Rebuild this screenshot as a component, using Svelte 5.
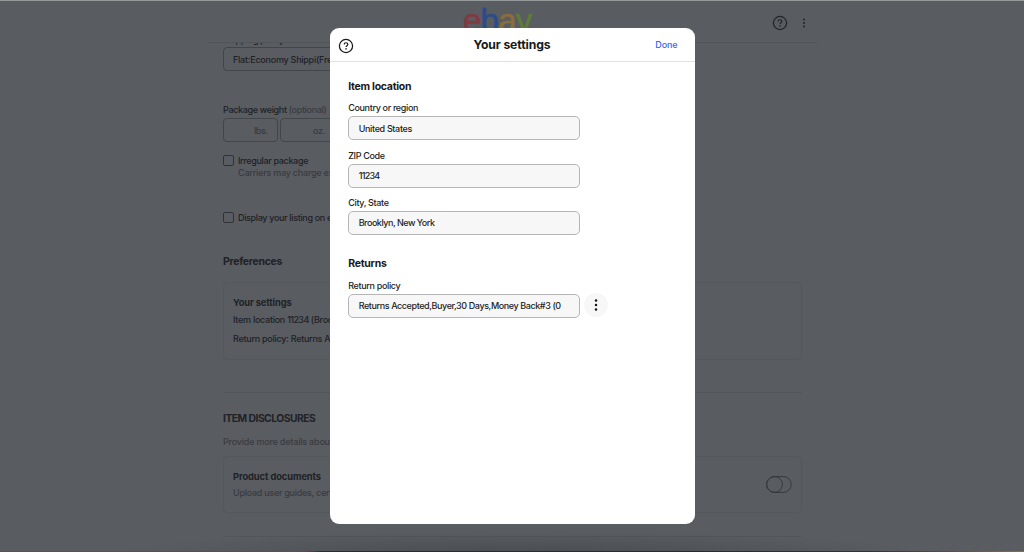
<script>
  const fields = [
    { label: 'Country or region', value: 'United States', cls: 'us' },
    { label: 'ZIP Code', value: '11234', cls: 'zip' },
    { label: 'City, State', value: 'Brooklyn, New York', cls: 'city' }
  ];
</script>

{#snippet help()}
  <svg class="help" viewBox="0 0 16 16" width="16" height="16" fill="none" stroke="currentColor">
    <circle cx="8" cy="8" r="6.6" stroke-width="1.25" />
    <path d="M6.2 6.5c0-1 .75-1.75 1.8-1.75s1.8.65 1.8 1.6c0 1.35-1.75 1.35-1.75 2.75" stroke-width="1.2" />
    <circle cx="8.03" cy="10.9" r=".8" fill="currentColor" stroke="none" />
  </svg>
{/snippet}

<div class="screen">
  <header class="top">
    <div class="logo"><span class="e">e</span><span class="b">b</span><span class="a">a</span><span class="y">y</span></div>
    <div class="tools">
      {@render help()}
      <svg width="4" height="10" viewBox="0 0 4 10" fill="currentColor"><circle cx="2" cy="1.4" r="1" /><circle cx="2" cy="5" r="1" /><circle cx="2" cy="8.6" r="1" /></svg>
    </div>
  </header>
  <main>
    <div class="line cut"><span>Shipping policy</span></div>
    <div class="box policy"><span>Flat:Economy Shippi(Free)</span></div>
    <div class="line weight"><span class="strong">Package weight</span>&nbsp;<span class="soft">(optional)</span></div>
    <div class="units">
      <div class="box unit">lbs.</div>
      <div class="box unit">oz.</div>
    </div>
    <div class="check irregular"><i></i><span>Irregular package</span></div>
    <div class="line sub soft"><span>Carriers may charge extra</span></div>
    <div class="check display"><i></i><span>Display your listing on eBay</span></div>
    <h2 class="pref">Preferences</h2>
    <section class="card settings">
      <b>Your settings</b>
      <p class="loc">Item location <span class="digits">11234</span> (Brooklyn)</p>
      <p class="ret">Return policy: Returns Accepted</p>
    </section>
    <hr />
    <h2 class="disc">ITEM DISCLOSURES</h2>
    <div class="line provide soft"><span>Provide more details about</span></div>
    <section class="card docs">
      <div>
        <b class="pd">Product documents</b>
        <p class="soft">Upload user guides, certificates</p>
      </div>
      <svg width="26" height="17" viewBox="0 0 26 17" fill="none" stroke="#36383c"><rect x=".6" y=".6" width="24.6" height="15.8" rx="7.9" /><circle cx="8.5" cy="8.5" r="7.9" /></svg>
    </section>
    <hr class="last" />
  </main>
  <div class="dock"></div>

  <div class="modal">
    <div class="head">
      {@render help()}
      <h1>Your settings</h1>
      <span class="done">Done</span>
    </div>
    <div class="body">
      <h3>Item location</h3>
      {#each fields as f}
        <div class="label {f.cls}"><span>{f.label}</span></div>
        <div class="field {f.cls}"><span>{f.value}</span></div>
      {/each}
      <h3 class="rt">Returns</h3>
      <div class="label rp"><span>Return policy</span></div>
      <div class="row">
        <div class="field long"><span>Returns Accepted,Buyer,30 Days,Money Back#3 (0</span></div>
        <div class="more"><svg width="4" height="14" viewBox="0 0 4 14" fill="#191919"><circle cx="2" cy="2.4" r="1.25" /><circle cx="2" cy="6.9" r="1.25" /><circle cx="2" cy="11.4" r="1.25" /></svg></div>
      </div>
    </div>
  </div>
</div>

<style>
  :global(body) { background: #595c61; overflow: hidden; }
  .screen, .screen * { box-sizing: border-box; }
  .screen { position: relative; width: 1024px; height: 552px; overflow: hidden; background: #595c61; border-top: 1px solid #949b9a; font-family: Inter, "Liberation Sans", sans-serif; font-size: 9px; letter-spacing: -.34px; font-weight: 450; color: #202226; white-space: nowrap; }
  svg { display: block; flex: none; }
  h1, h2, h3, p, hr { margin: 0; }
  .top { position: relative; z-index: 1; width: 609px; height: 42px; margin-left: 208px; background: #595c61; border-bottom: 1px solid #515459; display: flex; justify-content: space-between; }
  .logo { margin: 0 0 0 255px; font: 33px/40px "Liberation Sans", sans-serif; letter-spacing: -.8px; -webkit-text-stroke: .6px; }
  .e { color: #813a42; } .b { color: #2c4b8a; } .a { color: #8a6d3c; } .y { color: #5d7c38; }
  .tools { display: flex; align-items: center; gap: 14px; padding: 3px 11px 0 0; color: #222429; }
  main { width: 579px; margin-left: 223px; }
  .soft { color: #393b40; }
  .strong { font-weight: 500; }
  .line { display: flex; align-items: center; height: 12px; }
  .cut { margin-top: -10px; margin-bottom: 2px; }
  .box { border: 1px solid #42454a; border-radius: 4px; height: 24px; display: flex; align-items: center; padding: 0 9px; }
  .policy { width: 232px; letter-spacing: -.25px; }
  .weight { margin-top: 32px; }
  .units { display: flex; gap: 2px; margin-top: 3px; }
  .unit { width: 55px; justify-content: flex-end; color: #383a3f; }
  .check { display: flex; align-items: center; gap: 4px; height: 12px; }
  .check i { width: 11px; height: 11px; border: 1px solid #303237; border-radius: 2px; }
  .irregular { margin-top: 12px; }
  .sub { padding-left: 15px; letter-spacing: -.22px; }
  .display { margin-top: 33px; }
  h2 { font-size: 10.5px; font-weight: 650; height: 16px; line-height: 16px; letter-spacing: -.3px; }
  .pref { margin-top: 31px; }
  .card { border: 1px solid #54575c; border-radius: 5px; padding-left: 9px; }
  .card b { display: block; font-weight: 650; height: 14px; line-height: 14px; letter-spacing: -.35px; font-size: 9.3px; }
  .card b { letter-spacing: -.1px; }
  .card b.pd { letter-spacing: -.07px; }
  .card p { height: 14px; line-height: 14px; letter-spacing: -.27px; }
  .card .digits { letter-spacing: -.6px; }
  .settings { margin-top: 12px; height: 78px; padding-top: 13px; }
  .loc { margin-top: 3px; }
  .ret { margin-top: 5px; }
  hr { border: 0; height: 1px; background: #525559; margin-top: 32px; }
  .disc { margin-top: 17px; font-size: 10.3px; letter-spacing: -.5px; }
  .provide { margin-top: 9px; letter-spacing: -.2px; }
  .docs { margin-top: 9px; height: 57px; display: flex; justify-content: space-between; align-items: center; padding-right: 9px; }
  .docs p { margin-top: 2px; }
  .last { margin-top: 23px; }
  .dock { position: absolute; left: 0; bottom: 0; width: 1024px; height: 20px; background: linear-gradient(90deg, #59504f 0 300px, #703934 310px, #292b30 322px 710px, #303238 870px, #59413e 930px, #9b6440 1024px) bottom / 100% 1px no-repeat, radial-gradient(ellipse 400px 20px at 520px 100%, #292c3050, #292c3000); }

  .modal { position: absolute; z-index: 2; left: 329.5px; top: 27px; width: 365px; height: 496px; background: #fff; border-radius: 9px; color: #242424; }
  .head { height: 34px; border-bottom: 1px solid #e2e2e2; display: grid; grid-template-columns: 60px 1fr 60px; align-items: center; }
  .head .help { margin: 3px 0 0 8.5px; color: #191919; }
  h1 { text-align: center; font-size: 12.2px; font-weight: 650; letter-spacing: -.1px; color: #191919; }
  .done { color: #3665f3; text-align: right; padding-right: 17px; letter-spacing: -.1px; }
  .body { padding: 16.6px 0 0 18.7px; }
  h3 { font-size: 10.5px; font-weight: 650; letter-spacing: -.26px; color: #191919; height: 16px; line-height: 16px; }
  .label { height: 14px; line-height: 14px; margin-top: 8.4px; }
  .label.us { margin-top: 6.6px; }
  .field { width: 232px; height: 24px; border: 1px solid #b5b5b5; border-radius: 5px; background: #f7f7f7; padding: 0 9.5px; display: flex; align-items: center; margin-top: 1px; }
  .field.zip { letter-spacing: -.75px; }
  .field.city { letter-spacing: -.48px; }
  .field.long { letter-spacing: -.41px; }
  .rt { margin-top: 21.4px; }
  .label.rp { margin-top: 6.6px; }
  .row { display: flex; gap: 4px; align-items: center; }
  .more { width: 24px; height: 24px; border-radius: 50%; background: #f7f7f7; display: flex; align-items: center; justify-content: center; }
</style>
